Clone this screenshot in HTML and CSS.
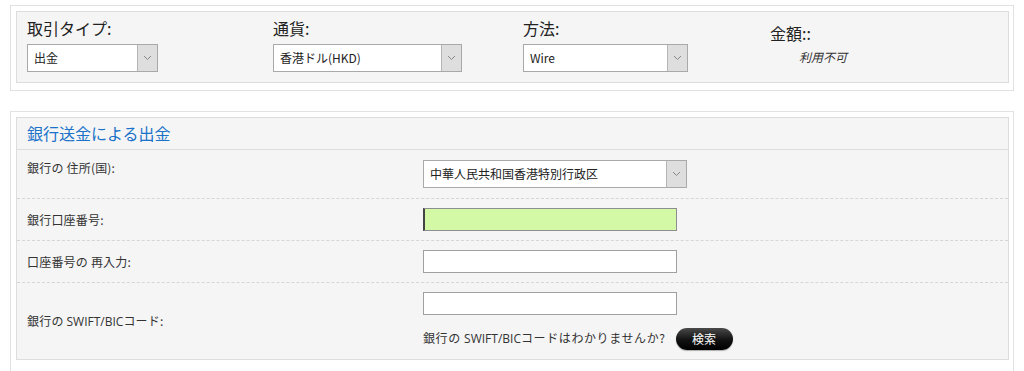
FILE: index.html
```html
<!DOCTYPE html>
<html lang="ja">
<head>
<meta charset="utf-8">
<title>出金</title>
<link rel="stylesheet" href="styles.css">
</head>
<body>
<div class="panel top-panel">
  <div class="panel-inner top-grid">
    <div class="field">
      <div class="field-label">取引タイプ:</div>
      <div class="select w-type"><span class="select-text">出金</span><span class="select-arrow"><svg width="9" height="6" viewBox="0 0 9 6"><path d="M1 1 L4.5 4.5 L8 1" fill="none" stroke="#888" stroke-width="1"/></svg></span></div>
    </div>
    <div class="field">
      <div class="field-label">通貨:</div>
      <div class="select w-cur"><span class="select-text">香港ドル(HKD)</span><span class="select-arrow"><svg width="9" height="6" viewBox="0 0 9 6"><path d="M1 1 L4.5 4.5 L8 1" fill="none" stroke="#888" stroke-width="1"/></svg></span></div>
    </div>
    <div class="field">
      <div class="field-label">方法:</div>
      <div class="select w-meth"><span class="select-text">Wire</span><span class="select-arrow"><svg width="9" height="6" viewBox="0 0 9 6"><path d="M1 1 L4.5 4.5 L8 1" fill="none" stroke="#888" stroke-width="1"/></svg></span></div>
    </div>
    <div class="field amount">
      <div class="amount-label">金額::</div>
      <div class="amount-value">利用不可</div>
    </div>
  </div>
</div>

<div class="panel form-panel">
  <div class="panel-inner">
    <div class="form-title">銀行送金による出金</div>
    <div class="row row-first">
      <div class="row-label label-top">銀行の 住所(国):</div>
      <div class="row-control">
        <div class="select w-country"><span class="select-text">中華人民共和国香港特別行政区</span><span class="select-arrow"><svg width="9" height="6" viewBox="0 0 9 6"><path d="M1 1 L4.5 4.5 L8 1" fill="none" stroke="#888" stroke-width="1"/></svg></span></div>
      </div>
    </div>
    <div class="row">
      <div class="row-label">銀行口座番号:</div>
      <div class="row-control"><div class="text-input focused"></div></div>
    </div>
    <div class="row">
      <div class="row-label">口座番号の 再入力:</div>
      <div class="row-control"><div class="text-input"></div></div>
    </div>
    <div class="row row-last">
      <div class="row-label">銀行の <span class="latin">SWIFT/BIC</span>コード:</div>
      <div class="row-control">
        <div class="text-input"></div>
        <div class="help-line">
          <span class="help-text">銀行の <span class="latin">SWIFT/BIC</span>コードはわかりませんか?</span>
          <span class="search-btn">検索</span>
        </div>
      </div>
    </div>
  </div>
</div>
</body>
</html>
```

FILE: styles.css
```css
html, body {
  margin: 0;
  padding: 0;
  background: #ffffff;
}

body {
  font-family: "Noto Sans CJK JP", "Noto Sans", sans-serif;
  color: #333333;
  font-size: 12px;
}

.panel {
  margin-left: 10px;
  width: 1004px;
  border: 1px solid #e2e2e2;
  padding: 5px 4px 5px 5px;
  box-sizing: border-box;
  background: #ffffff;
}

.top-panel {
  margin-top: 5px;
  height: 86px;
}

.form-panel {
  margin-top: 20px;
  padding-bottom: 20px;
}

.panel-inner {
  background: #f5f5f5;
  border: 1px solid #dddddd;
}

.top-grid {
  height: 72px;
  box-sizing: border-box;
  display: grid;
  grid-template-columns: 246px 250px 247px 1fr;
  padding: 6px 0 0 10px;
}

.field-label {
  font-size: 16px;
  line-height: 20px;
  height: 20px;
  color: #222222;
  margin-bottom: 6px;
}

.select {
  display: flex;
  height: 28px;
  box-sizing: border-box;
  border: 1px solid #a9a9a9;
  background: #ffffff;
}

.select-text {
  flex: 1;
  padding-left: 6px;
  line-height: 26px;
  font-size: 12px;
  color: #222222;
  white-space: nowrap;
  overflow: hidden;
}

.select-arrow {
  width: 19px;
  border-left: 1px solid #b5b5b5;
  background: #dedede;
  display: flex;
  align-items: center;
  justify-content: center;
}

.w-type { width: 131px; }
.w-cur { width: 189px; }
.w-meth { width: 165px; }
.w-country { width: 264px; }

.amount {
  padding-top: 5px;
}

.amount-label {
  font-size: 16px;
  line-height: 20px;
  color: #222222;
}

.amount-value {
  margin-top: 6px;
  padding-left: 29px;
  font-style: italic;
  font-size: 12px;
  line-height: 16px;
  color: #333333;
}

.form-title {
  height: 31px;
  border-bottom: 1px solid #dddddd;
  padding-left: 10px;
  font-size: 16px;
  line-height: 31px;
  color: #1a72c9;
}

.row {
  display: grid;
  grid-template-columns: 396px 1fr;
  align-items: center;
  border-top: 1px dashed #d6d6d6;
  padding: 9px 0 9px 10px;
}

.row-first {
  border-top: none;
  padding-top: 10px;
  padding-bottom: 10px;
}

.row-last {
  padding-bottom: 9px;
}

.row-label {
  font-size: 12px;
  line-height: 16px;
  color: #333333;
  letter-spacing: 0.2px;
}

.label-top {
  align-self: start;
  padding-top: 0;
}

.latin {
  font-family: "Open Sans", "Noto Sans", sans-serif;
  letter-spacing: 0;
}

.text-input {
  width: 254px;
  height: 23px;
  box-sizing: border-box;
  border: 1px solid #a0a0a0;
  background: #ffffff;
}

.text-input.focused {
  background: #d3f9a6;
  border-color: #8e8e8e;
  border-left: 2px solid #444444;
}

.help-line {
  display: flex;
  align-items: center;
  gap: 10px;
  margin-top: 12px;
  line-height: 22px;
}

.help-text {
  letter-spacing: 0.6px;
}

.search-btn {
  display: inline-block;
  width: 57px;
  height: 22px;
  border-radius: 11px;
  background: linear-gradient(#4a4a4a, #111111 55%, #000000);
  color: #ffffff;
  text-align: center;
  line-height: 22px;
  font-size: 12px;
  box-shadow: 0 1px 1px rgba(0, 0, 0, 0.3);
}
```
